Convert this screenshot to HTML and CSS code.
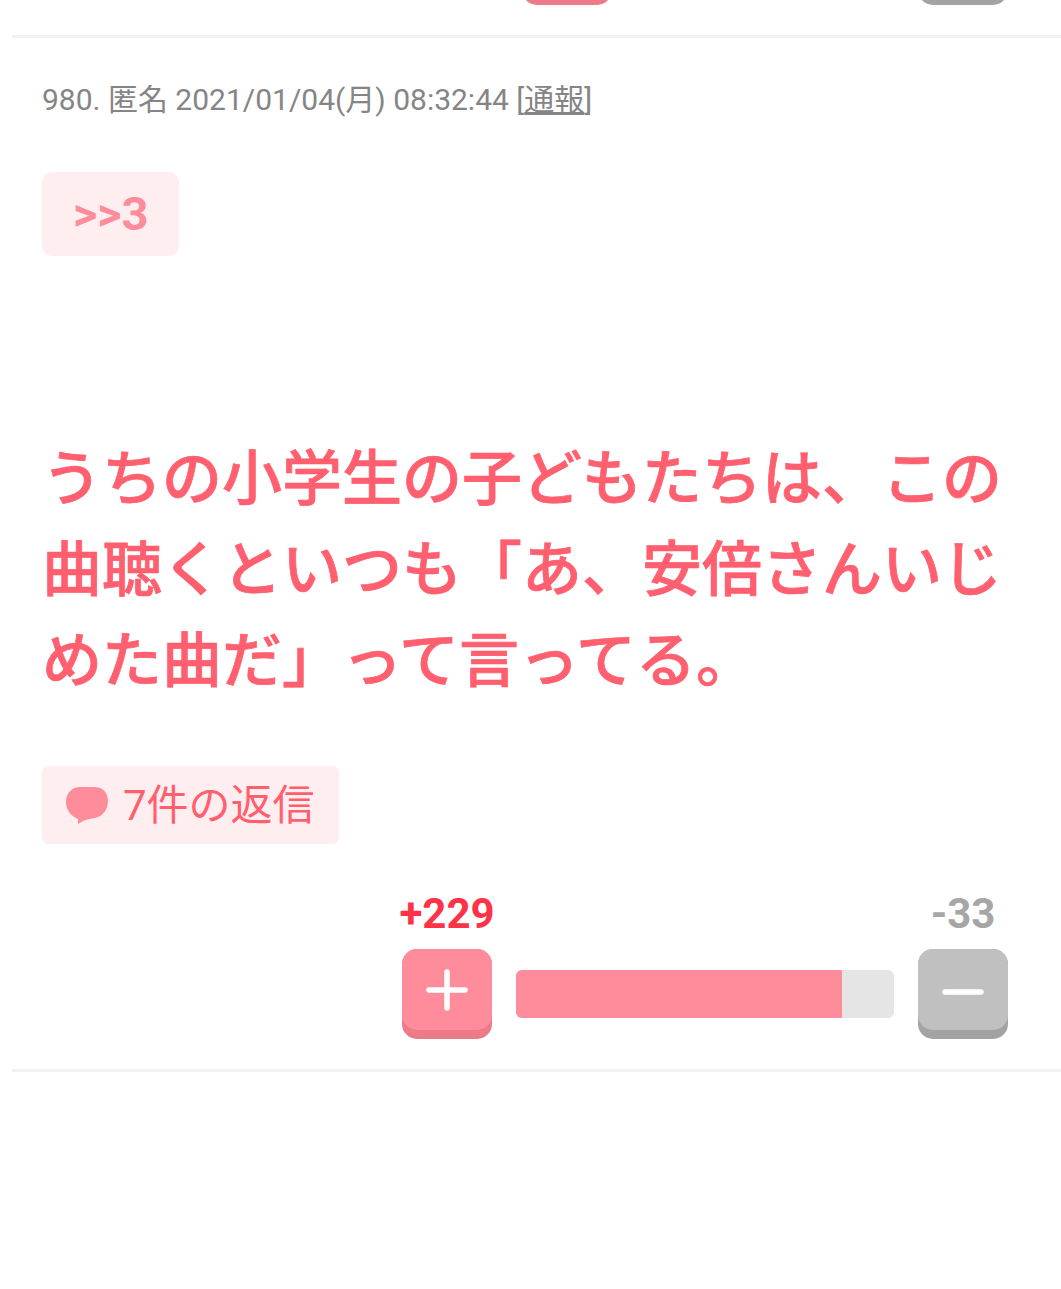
FILE: index.html
```html
<!DOCTYPE html>
<html lang="ja">
<head>
    <meta charset="UTF-8">
    <title>980</title>
    <link rel="stylesheet" href="styles.css">
</head>
<body>
    <div class="prev_row">
        <div class="prev_buttons">
            <span class="vote_btn plus_btn"><span class="vote_face"></span></span>
            <span class="vote_btn minus_btn"><span class="vote_face"></span></span>
        </div>
    </div>

    <div class="comment">
        <div class="meta">980. 匿名 2021/01/04(月) 08:32:44 [<a class="report">通報</a>]</div>
        <div class="anchor">&gt;&gt;3</div>
        <p class="body_text">うちの小学生の子どもたちは、この曲聴くといつも「あ、安倍さんいじめた曲だ」って言ってる。</p>
        <div class="reply">
            <svg class="reply_icon" viewBox="0 0 42 38" width="42" height="38">
                <path d="M14 0H28C37 0 42 6 42 14C42 24 35 31 26 31.500C21 32 16 34 12 37L12 32C5 29 0 23 0 15C0 6 6 0 14 0Z" fill="#ff8c9a"/>
            </svg>
            <span class="reply_text">7件の返信</span>
        </div>
        <div class="votes">
            <div class="vote_col">
                <div class="count count_plus">+229</div>
                <span class="vote_btn plus_btn">
                    <span class="vote_face">
                        <svg viewBox="0 0 42 42" width="42" height="42">
                            <path d="M21 3V39M3 21H39" stroke="#fff" stroke-width="5.500" stroke-linecap="round"/>
                        </svg>
                    </span>
                </span>
            </div>
            <div class="bar"><div class="bar_fill" style="width: 86.2%"></div></div>
            <div class="vote_col">
                <div class="count count_minus">-33</div>
                <span class="vote_btn minus_btn">
                    <span class="vote_face">
                        <svg viewBox="0 0 42 42" width="42" height="42">
                            <path d="M3 23H39" stroke="#fff" stroke-width="5.500" stroke-linecap="round"/>
                        </svg>
                    </span>
                </span>
            </div>
        </div>
    </div>
</body>
</html>
```

FILE: styles.css
```css
* {
    margin: 0;
    padding: 0;
    box-sizing: border-box;
}

body {
    min-height: 1289px;
    background: #fff;
    font-family: Roboto, 'Noto Sans CJK JP', sans-serif;
    overflow: hidden;
}

.prev_row {
    height: 38px;
    margin-left: 12px;
    border-bottom: 3px solid #f2f2f2;
    overflow: hidden;
}

.prev_buttons {
    display: flex;
    justify-content: flex-end;
    gap: 306px;
    margin-top: -85px;
    padding-right: 53px;
}

.comment {
    margin-left: 12px;
    padding: 43px 53px 30px 30px;
    border-bottom: 3px solid #f2f2f2;
}

.meta {
    color: #858585;
    font-size: 30px;
    line-height: 38px;
}

.report {
    text-decoration: underline;
}

.anchor {
    display: inline-block;
    height: 84px;
    margin-top: 53px;
    padding: 0 31px;
    background: #ffeef0;
    border-radius: 10px;
    color: #ff8c9a;
    font-size: 47px;
    font-weight: 700;
    line-height: 84px;
}

.body_text {
    margin-top: 178px;
    color: #ff5f6f;
    font-size: 60px;
    font-weight: 500;
    line-height: 91px;
    -webkit-text-stroke: 0.7px #ff5f6f;
}

.reply {
    display: inline-flex;
    align-items: center;
    gap: 15px;
    height: 78px;
    margin-top: 59px;
    padding: 0 24px;
    background: #ffeef0;
    border-radius: 6px;
    color: #ff5f6f;
    font-size: 42px;
}

.reply_icon {
    margin-top: 2px;
}

.reply_text {
    margin-bottom: 8px;
}

.votes {
    display: flex;
    justify-content: flex-end;
    align-items: flex-end;
    gap: 24px;
    margin-top: 45px;
}

.vote_col {
    display: flex;
    flex-direction: column;
    align-items: center;
    width: 90px;
}

.count {
    font-size: 42px;
    font-weight: 700;
    line-height: 50px;
    margin-bottom: 10px;
    white-space: nowrap;
}

.count_plus {
    color: #ff3347;
}

.count_minus {
    color: #a6a6a6;
}

.vote_btn {
    display: block;
    flex: none;
    width: 90px;
    height: 90px;
    border-radius: 15px;
    overflow: hidden;
}

.vote_face {
    display: flex;
    justify-content: center;
    align-items: center;
    height: 81px;
    border-radius: 15px;
}

.plus_btn {
    background: #ec7a87;
}

.plus_btn .vote_face {
    background: #ff8c9a;
}

.minus_btn {
    background: #a3a3a3;
}

.minus_btn .vote_face {
    background: #c0c0c0;
}

.bar {
    width: 378px;
    height: 48px;
    margin-bottom: 21px;
    background: #e5e5e5;
    border-radius: 6px;
    overflow: hidden;
}

.bar_fill {
    height: 100%;
    background: #ff8c9a;
}
```
